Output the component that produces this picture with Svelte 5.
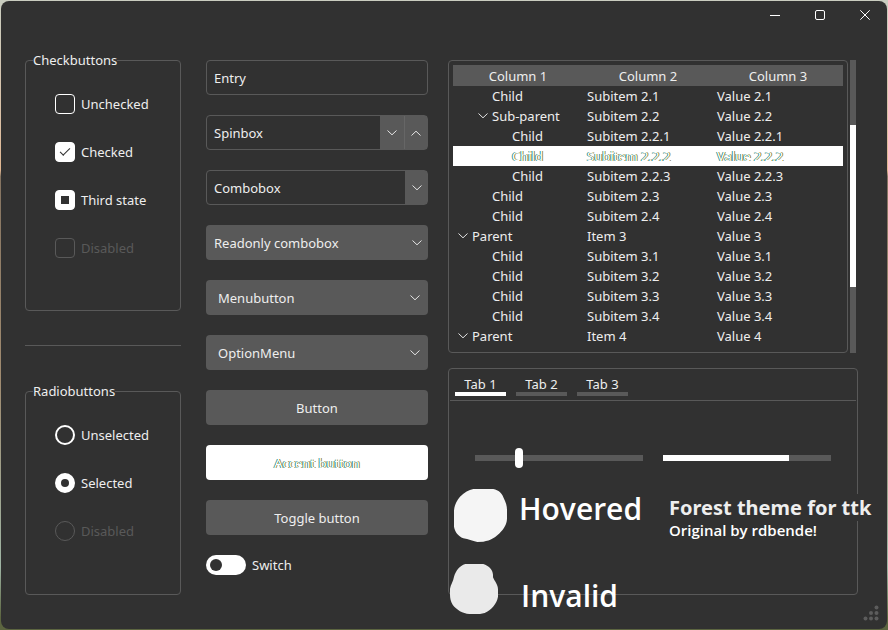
<script>
  const checks = [
    { label: 'Unchecked', checked: false, mixed: false, disabled: false },
    { label: 'Checked', checked: true, mixed: false, disabled: false },
    { label: 'Third state', checked: false, mixed: true, disabled: false },
    { label: 'Disabled', checked: false, mixed: false, disabled: true },
  ];
  const radios = [
    { label: 'Unselected', disabled: false },
    { label: 'Selected', disabled: false },
    { label: 'Disabled', disabled: true },
  ];
  let radio = $state('Selected');
  let columns = ['Column 1', 'Column 2', 'Column 3'];
  const rows = [
    { depth: 1, name: 'Child', item: 'Subitem 2.1', value: 'Value 2.1' },
    { depth: 1, open: true, name: 'Sub-parent', item: 'Subitem 2.2', value: 'Value 2.2' },
    { depth: 2, name: 'Child', item: 'Subitem 2.2.1', value: 'Value 2.2.1' },
    { depth: 2, name: 'Child', item: 'Subitem 2.2.2', value: 'Value 2.2.2' },
    { depth: 2, name: 'Child', item: 'Subitem 2.2.3', value: 'Value 2.2.3' },
    { depth: 1, name: 'Child', item: 'Subitem 2.3', value: 'Value 2.3' },
    { depth: 1, name: 'Child', item: 'Subitem 2.4', value: 'Value 2.4' },
    { depth: 0, open: true, name: 'Parent', item: 'Item 3', value: 'Value 3' },
    { depth: 1, name: 'Child', item: 'Subitem 3.1', value: 'Value 3.1' },
    { depth: 1, name: 'Child', item: 'Subitem 3.2', value: 'Value 3.2' },
    { depth: 1, name: 'Child', item: 'Subitem 3.3', value: 'Value 3.3' },
    { depth: 1, name: 'Child', item: 'Subitem 3.4', value: 'Value 3.4' },
    { depth: 0, open: true, name: 'Parent', item: 'Item 4', value: 'Value 4' },
  ];
  let selected = $state(3);
  const tabs = ['Tab 1', 'Tab 2', 'Tab 3'];
  let tab = $state(0);
  let level = $state(25);
</script>

{#snippet chevron(up = false)}
  <svg class="chevron" class:up viewBox="0 0 10 6" width="10" height="6" aria-hidden="true">
    <path d="M0.5 0.5 L5 4.8 L9.5 0.5" />
  </svg>
{/snippet}

<div class="window">
  <header>
    <button aria-label="Minimize">
      <svg viewBox="0 0 10 10" width="10" height="10"><path d="M0 5.5H10" /></svg>
    </button>
    <button aria-label="Maximize">
      <svg viewBox="0 0 10 10" width="10" height="10"><rect x="0.5" y="0.5" width="9" height="9" rx="1.5" /></svg>
    </button>
    <button aria-label="Close">
      <svg viewBox="0 0 10 10" width="10" height="10"><path d="M0.3 0.3L9.7 9.7M9.7 0.3L0.3 9.7" /></svg>
    </button>
  </header>

  <main>
    <section class="choices">
      <fieldset>
        <legend>Checkbuttons</legend>
        {#each checks as c}
          <label class:disabled={c.disabled}>
            <input type="checkbox" checked={c.checked} indeterminate={c.mixed} disabled={c.disabled} />
            {c.label}
          </label>
        {/each}
      </fieldset>
      <hr />
      <fieldset class="fill">
        <legend>Radiobuttons</legend>
        {#each radios as r}
          <label class:disabled={r.disabled}>
            <input type="radio" name="choice" value={r.label} bind:group={radio} disabled={r.disabled} />
            {r.label}
          </label>
        {/each}
      </fieldset>
    </section>

    <section class="controls">
      <div class="field"><input type="text" value="Entry" aria-label="Entry" /></div>
      <div class="field">
        <input type="text" value="Spinbox" aria-label="Spinbox" />
        <button class="step" aria-label="Decrease">{@render chevron()}</button>
        <button class="step next" aria-label="Increase">{@render chevron(true)}</button>
      </div>
      <div class="field">
        <input type="text" value="Combobox" aria-label="Combobox" />
        <button class="step list" aria-label="Open list">{@render chevron()}</button>
      </div>
      <div class="drop">
        <select aria-label="Readonly combobox"><option>Readonly combobox</option></select>
        {@render chevron()}
      </div>
      <button class="btn menu"><span>Menubutton</span>{@render chevron()}</button>
      <div class="drop option">
        <select aria-label="OptionMenu"><option>OptionMenu</option></select>
        {@render chevron()}
      </div>
      <button class="btn">Button</button>
      <button class="btn accent">Accent button</button>
      <button class="btn">Toggle button</button>
      <label class="switch"><input type="checkbox" role="switch" aria-checked="false" />Switch</label>
    </section>

    <section class="views">
      <div class="tree">
        <div class="frame">
          <table>
            <thead>
              <tr>{#each columns as c}<th scope="col">{c}</th>{/each}</tr>
            </thead>
            <tbody>
              {#each rows as r, i}
                <tr class:selected={i === selected} onclick={() => (selected = i)}>
                  <td>
                    <div class="node depth{r.depth}">
                      <span class="mark">{#if r.open}{@render chevron()}{/if}</span>{r.name}
                    </div>
                  </td>
                  <td>{r.item}</td>
                  <td>{r.value}</td>
                </tr>
              {/each}
            </tbody>
          </table>
        </div>
        <div class="scrollbar"><div class="thumb"></div></div>
      </div>

      <div class="notebook">
        <div class="tabs" role="tablist">
          {#each tabs as t, i}
            <button role="tab" aria-selected={i === tab} onclick={() => (tab = i)}>{t}</button>
          {/each}
        </div>
        <div class="meters">
          <input type="range" min="0" max="100" bind:value={level} aria-label="Scale" />
          <progress max="100" value="75" aria-label="Progress"></progress>
        </div>
        <div class="note hovered">
          <svg viewBox="42 177 159 159" width="53" height="53" aria-hidden="true">
            <path fill="#f5f5f5" d="M100 177H160C176 180 186 190 190 202C198 218 201 228 201 240V266C200 284 192 294 184 304C168 322 152 332 130 335L112 336C96 332 86 328 70 325C54 318 45 306 42 290V242C44 222 52 210 60 200C74 186 86 180 100 177Z" />
          </svg>
          <span>Hovered</span>
        </div>
        <div class="note invalid">
          <svg viewBox="30 402 144 150" width="48" height="50" aria-hidden="true">
            <path fill="#eaeaea" d="M76 402H130C146 408 158 418 159 434V442C164 454 174 464 174 478V500C170 522 154 540 134 549L120 552H88C68 550 50 540 38 524C32 514 30 504 30 494V476C32 464 40 454 42 440C48 422 58 408 76 402Z" />
          </svg>
          <span>Invalid</span>
        </div>
        <div class="credit">
          <strong>Forest theme for ttk</strong>
          <span>Original by rdbende!</span>
        </div>
      </div>
    </section>
  </main>

  <svg class="grip" viewBox="0 0 16 16" width="16" height="16" aria-hidden="true">
    <circle cx="13.5" cy="2.5" r="2" />
    <circle cx="8" cy="8" r="2" /><circle cx="13.5" cy="8" r="2" />
    <circle cx="2.5" cy="13.5" r="2" /><circle cx="8" cy="13.5" r="2" /><circle cx="13.5" cy="13.5" r="2" />
  </svg>
</div>

<style>
  :global(body) {
    margin: 0;
    background: linear-gradient(#c9cdc0 0, #dcc0a4 20%, #e0b690 27%, #857461 28%, #a08b70 60%, #9fb5a4 90%, #5c6540 98%);
  }
  .window {
    --bg: #313131;
    --line: #595959;
    --fg: #eeeeee;
    position: relative;
    box-sizing: border-box;
    display: flex;
    flex-direction: column;
    min-height: calc(100vh - 2px);
    margin: 0 1px;
    border-radius: 8px;
    background: var(--bg);
    color: var(--fg);
    font: 13px/18px 'Noto Sans', sans-serif;
  }
  :global(#app) { padding: 1px 0; }
  button, input, select {
    box-sizing: border-box;
    margin: 0;
    padding: 0;
    border: 0;
    background: none;
    color: inherit;
    font: inherit;
    appearance: none;
  }
  header {
    display: flex;
    justify-content: flex-end;
  }
  header button {
    display: grid;
    place-items: center;
    width: 45px;
    height: 28px;
  }
  header svg {
    fill: none;
    stroke: #fff;
  }
  main {
    flex: 1;
    display: grid;
    grid-template-columns: 156fr 227fr 410fr;
    column-gap: 20px;
    padding: 22px 29px 34px 24px;
  }
  section {
    display: flex;
    flex-direction: column;
    min-width: 0;
  }

  fieldset {
    display: flex;
    flex-direction: column;
    gap: 28px;
    min-width: 0;
    margin: 0;
    padding: 25px 0 52px 29px;
    border: 1px solid var(--line);
    border-radius: 4px;
  }
  .fill { flex: 1; }
  legend {
    margin-left: -22px;
    padding: 0;
  }
  label {
    display: flex;
    align-items: center;
    gap: 6px;
    height: 20px;
  }
  .disabled { color: var(--line); }
  fieldset input {
    display: grid;
    place-items: center;
    width: 20px;
    height: 20px;
    border: 1px solid #fff;
    border-radius: 4px;
  }
  fieldset input[type='radio'] { border-radius: 50%; border-width: 2px; }
  fieldset input:checked, fieldset input:indeterminate[type='checkbox'] { background: #fff; }
  fieldset input[type='radio']:disabled, fieldset input:disabled { border: 1px solid var(--line); }
  fieldset input[type='checkbox']:checked::after {
    content: '';
    width: 9px;
    height: 4px;
    margin-top: -3px;
    border: solid var(--bg);
    border-width: 0 0 1px 1px;
    transform: rotate(-45deg);
  }
  input[type='checkbox']:indeterminate::after {
    content: '';
    width: 8px;
    height: 8px;
    background: var(--bg);
  }
  input[type='radio']:checked::after {
    content: '';
    width: 8px;
    height: 8px;
    border-radius: 50%;
    background: var(--bg);
  }
  hr {
    width: 100%;
    height: 1px;
    margin: 34px 0 36px;
    border: 0;
    background: var(--line);
  }

  .controls {
    gap: 20px;
    padding: 9px 0 0 5px;
  }
  .field {
    box-sizing: border-box;
    display: flex;
    height: 35px;
    border: 1px solid var(--line);
    border-radius: 4px;
  }
  .field input {
    flex: 1;
    min-width: 0;
    padding: 0 7px;
  }
  .step {
    display: grid;
    place-items: center;
    width: 24px;
    background: var(--line);
  }
  .step.next {
    width: 23px;
    border-left: 1px solid #666;
  }
  .step.list {
    width: 22px;
    padding-left: 2px;
  }
  .chevron {
    fill: none;
    stroke: #e4e4e4;
    stroke-width: 1;
  }
  .up { transform: scaleY(-1); }
  .btn, .drop select {
    width: 100%;
    height: 35px;
    border-radius: 4px;
    background: var(--line);
  }
  .drop {
    display: grid;
    align-items: center;
  }
  .drop > :global(*) { grid-area: 1 / 1; }
  .drop select { padding-left: 8px; }
  .drop .chevron {
    justify-self: end;
    margin-right: 6px;
    pointer-events: none;
  }
  .option select { padding-left: 12px; }
  .option .chevron { margin-right: 8px; }
  .menu {
    display: flex;
    align-items: center;
    justify-content: space-between;
    padding: 0 8px 0 12px;
  }
  .accent, .selected {
    background: #fff;
    color: #fff;
    text-shadow: -1px 0 #2e8f8c, 1px 0 #8f8433;
  }
  .switch input {
    display: grid;
    align-items: center;
    width: 40px;
    height: 20px;
    padding-left: 4px;
    border-radius: 10px;
    background: #fff;
  }
  .switch input::before {
    content: '';
    width: 12px;
    height: 12px;
    border-radius: 50%;
    background: var(--bg);
  }

  .views {
    gap: 15px;
    padding-top: 9px;
  }
  .tree {
    display: flex;
    gap: 2px;
    padding-right: 2px;
  }
  .frame {
    flex: 1;
    padding: 4px 4px 6px;
    border: 1px solid var(--line);
    border-radius: 4px;
  }
  table {
    width: 100%;
    table-layout: fixed;
    border-collapse: collapse;
  }
  th {
    height: 21px;
    padding: 0;
    background: var(--line);
    font-weight: 400;
  }
  td {
    height: 20px;
    padding: 0 0 0 4px;
  }
  td:first-child { padding-left: 5px; }
  .node { display: flex; }
  .depth1 { padding-left: 20px; }
  .depth2 { padding-left: 40px; }
  .mark {
    display: flex;
    align-items: center;
    width: 14px;
  }
  .scrollbar {
    width: 6px;
    background: var(--line);
  }
  .thumb {
    height: 162px;
    margin-top: 65px;
    background: #fff;
  }

  .notebook {
    flex: 1;
    position: relative;
    border: 1px solid var(--line);
    border-radius: 4px;
  }
  .tabs {
    display: flex;
    gap: 10px;
    margin: 0 1px;
    padding: 6px 5px 4px;
    border-bottom: 1px solid var(--line);
  }
  .tabs button {
    width: 51px;
    height: 21px;
    padding-top: 1px;
    border-bottom: 4px solid var(--line);
    line-height: 16px;
  }
  .tabs [aria-selected='true'] { border-color: #fff; }
  .meters {
    display: grid;
    grid-template-columns: 1fr 1fr;
    align-items: center;
    gap: 20px;
    padding: 47px 26px 0;
  }
  input[type='range'] {
    width: 100%;
    height: 20px;
  }
  input[type='range']::-webkit-slider-runnable-track {
    height: 6px;
    background: var(--line);
  }
  input[type='range']::-webkit-slider-thumb {
    width: 8px;
    height: 20px;
    margin-top: -7px;
    border-radius: 4px;
    background: #fff;
    appearance: none;
  }
  progress {
    width: 100%;
    height: 6px;
    border: 0;
    appearance: none;
  }
  progress::-webkit-progress-bar { background: var(--line); }
  progress::-webkit-progress-value { background: #fff; }

  .note {
    position: absolute;
    display: flex;
    align-items: center;
    color: #fff;
    font: 600 30px/44px 'Open Sans', sans-serif;
  }
  .hovered {
    top: 118px;
    left: 5px;
    gap: 12px;
  }
  .hovered span { margin-bottom: 12px; }
  .invalid {
    top: 191px;
    left: 1px;
    gap: 23px;
  }
  .invalid span { margin-top: 14px; }
  .credit {
    position: absolute;
    top: 125px;
    left: 220px;
    display: flex;
    flex-direction: column;
    white-space: nowrap;
  }
  .credit strong {
    background: var(--bg);
    font: 700 20px/27px 'Noto Sans', sans-serif;
  }
  .credit span {
    color: #fff;
    font: 600 15px/18px 'Open Sans', sans-serif;
  }
  .grip {
    position: absolute;
    right: 8px;
    bottom: 8px;
    fill: #5c5c5c;
  }
</style>
